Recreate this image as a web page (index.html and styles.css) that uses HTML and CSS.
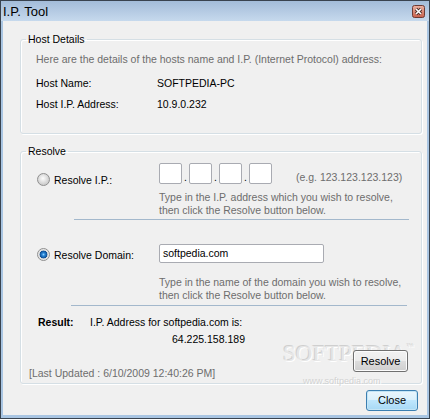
FILE: index.html
```html
<!DOCTYPE html>
<html lang="en">
<head>
  <meta charset="UTF-8" />
  <title>I.P. Tool</title>
  <link rel="stylesheet" href="styles.css">
</head>
<body>
  <div class="window">
    <div class="titlebar">
      <span class="title">I.P. Tool</span>
      <span class="close-x">
        <svg width="13" height="13" viewBox="0 0 13 13">
          <defs>
            <linearGradient id="xg" x1="0" y1="0" x2="0" y2="1">
              <stop offset="0" stop-color="#eab3a4" />
              <stop offset="1" stop-color="#c9604c" />
            </linearGradient>
          </defs>
          <rect x="0.5" y="0.5" width="12" height="12" rx="2" fill="url(#xg)" stroke="#6e3b34" />
          <path d="M4 4l5 5M9 4l-5 5" stroke="#4a2c28" stroke-width="3.2" />
          <path d="M4 4l5 5M9 4l-5 5" stroke="#fff" stroke-width="1.6" />
        </svg>
      </span>
    </div>

    <div class="client">
      <fieldset class="group host">
        <legend>Host Details</legend>
        <p class="note">Here are the details of the hosts name and I.P. (Internet Protocol) address:</p>
        <div class="field first"><span class="field-label">Host Name:</span><span>SOFTPEDIA-PC</span></div>
        <div class="field"><span class="field-label">Host I.P. Address:</span><span>10.9.0.232</span></div>
      </fieldset>

      <fieldset class="group resolve">
        <legend>Resolve</legend>

        <div class="option option-ip">
          <label class="option-label"><span class="radio"></span>Resolve I.P.:</label>
          <div class="option-body">
            <div class="ip-row">
              <span class="octet"></span><span class="dot">.</span><span class="octet"></span><span class="dot">.</span><span class="octet"></span><span class="dot">.</span><span class="octet"></span>
              <span class="hint">(e.g. 123.123.123.123)</span>
            </div>
            <p class="note">Type in the I.P. address which you wish to resolve,<br>then click the Resolve button below.</p>
          </div>
        </div>
        <hr class="sep sep-ip">

        <div class="option option-domain">
          <label class="option-label"><span class="radio checked"></span>Resolve Domain:</label>
          <div class="option-body">
            <div class="text-input">softpedia.com</div>
            <p class="note">Type in the name of the domain you wish to resolve,<br>then click the Resolve button below.</p>
          </div>
        </div>
        <hr class="sep sep-domain">

        <div class="result">
          <b class="result-label">Result:</b>
          <div class="result-text">
            I.P. Address for softpedia.com is:
            <span class="result-ip">64.225.158.189</span>
          </div>
        </div>

        <div class="footer-row">
          <span class="updated">[Last Updated : 6/10/2009 12:40:26 PM]</span>
          <button class="btn btn-resolve">Resolve</button>
        </div>
      </fieldset>

      <div class="actions">
        <button class="btn btn-close">Close</button>
      </div>
    </div>

    <div class="watermark">SOFTPEDIA<sup>™</sup></div>
    <div class="watermark-url">www.softpedia.com</div>
  </div>
</body>
</html>
```

FILE: styles.css
```css
body {
  margin: 0;
  font: 10.5px/13px "Liberation Sans", Arial, sans-serif;
  color: #000;
  background: #fff;
}
.window {
  position: relative;
  width: 430px;
  height: 419px;
  box-sizing: border-box;
  border: 1px solid #39434f;
  background: #a9c5e2;
  display: flex;
  flex-direction: column;
}
.titlebar {
  height: 20px;
  flex: none;
  display: flex;
  justify-content: space-between;
  align-items: flex-start;
  padding: 0 4px 0 2px;
  background: linear-gradient(#a3bcd9, #c6d9ed);
}
.title {
  font-size: 13px;
  line-height: 15px;
  margin-top: 3px;
}
.close-x {
  margin-top: 4px;
  height: 13px;
}
.client {
  flex: 1;
  min-height: 0;
  background: #f0f0f0;
  margin: 0 2px 3px 2px;
}

/* group boxes */
.group {
  margin: 0 5px 0 17px;
  padding: 0 12px 0 15px;
  border: 1px solid #d5dfe5;
  border-radius: 3px;
  box-shadow: 1px 1px 0 #fff, inset 1px 1px 0 #fff;
  min-width: 0;
}
.group legend {
  padding: 0 2px;
  margin-left: -10px;
  line-height: 13px;
}
.host {
  margin-top: 12px;
  padding-top: 7px;
  padding-bottom: 22px;
}
.resolve {
  margin-top: 11px;
  padding-top: 5px;
  padding-bottom: 3px;
}
.note {
  margin: 0;
  color: #6d6d6d;
  white-space: nowrap;
}
.field {
  display: flex;
  margin-top: 8px;
}
.field.first {
  margin-top: 11px;
}
.field-label {
  width: 121px;
  flex: none;
}

/* resolve options */
.option {
  display: flex;
}
.option-label {
  width: 123px;
  flex: none;
  display: flex;
  align-items: flex-start;
}
.option-ip .option-label {
  padding-top: 11px;
}
.option-domain {
  margin-top: 24px;
}
.option-domain .option-label {
  padding-top: 5px;
}
.radio {
  width: 13px;
  height: 13px;
  box-sizing: border-box;
  flex: none;
  margin: -1px 4px 0 1px;
  border-radius: 50%;
  border: 1px solid #8f8f8f;
  background: radial-gradient(circle at 45% 40%, #fdfdfd 0, #e6e6e6 3px, #cfcfcf 6px);
}
.radio.checked {
  background: radial-gradient(circle at 50% 50%, #8fd0ff 0, #2a86d6 1.5px, #0d4f96 3.6px, #d9d9d9 4.2px, #f4f4f4 6px);
}
.ip-row {
  display: flex;
  align-items: flex-end;
  height: 21px;
}
.octet {
  width: 23px;
  height: 21px;
  box-sizing: border-box;
  border: 1px solid #a9abb2;
  border-radius: 2px;
  background: #fff;
}
.dot {
  width: 7px;
  text-align: center;
}
.hint {
  margin-left: 24px;
  color: #6d6d6d;
}
.option-ip .note {
  margin-top: 7px;
}
.text-input {
  width: 165px;
  height: 19px;
  box-sizing: border-box;
  border: 1px solid #a9abb2;
  border-radius: 2px;
  background: #fff;
  padding: 2px 3px;
  line-height: 13px;
}
.option-domain .note {
  margin-top: 13px;
}
.sep {
  border: 0;
  height: 1px;
  background: #a3b8cc;
  margin: 2px 0 0 38px;
}
.sep-domain {
  margin: 3px 2px 0 35px;
}

/* result */
.result {
  display: flex;
  margin-top: 10px;
}
.result-label {
  width: 52px;
  flex: none;
  padding-left: 2px;
}
.result-ip {
  display: block;
  margin-top: 4px;
  padding-left: 82px;
}
.footer-row {
  display: flex;
  justify-content: space-between;
  align-items: flex-start;
  margin-top: 4px;
}
.updated {
  margin: 17px 0 0 -7px;
  color: #6d6d6d;
}

/* buttons */
.btn {
  position: relative;
  z-index: 1;
  font: 11px/13px "Liberation Sans", Arial, sans-serif;
  color: #000;
  padding: 0;
  border: 1px solid #707070;
  border-radius: 3px;
  background: linear-gradient(#f2f2f2 0, #ebebeb 50%, #dddddd 50%, #cfcfcf 100%);
  box-shadow: inset 0 0 0 1px #fcfcfc;
}
.btn-resolve {
  width: 55px;
  height: 22px;
  margin-right: 1px;
}
.actions {
  display: flex;
  justify-content: flex-end;
  padding-right: 9px;
  margin-top: 6px;
}
.btn-close {
  width: 52px;
  height: 21px;
  border-color: #3c7fb1;
  background: linear-gradient(#eaf6fd 0, #d9f0fc 50%, #bee6fd 50%, #a7d9f5 100%);
  box-shadow: inset 0 0 0 1px #c4e5f6;
}

/* softpedia watermark */
.watermark {
  position: absolute;
  left: 282px;
  top: 341px;
  font: 23px/24px "Liberation Serif", serif;
  color: #e6e6e6;
  text-shadow: 1px 1px 0 #fff, -1px -1px 0 #cfcfcf;
  pointer-events: none;
}
.watermark sup {
  font-size: 7px;
  vertical-align: top;
  line-height: 10px;
}
.watermark-url {
  position: absolute;
  left: 302px;
  top: 375px;
  font: 9px/10px "Liberation Sans", Arial, sans-serif;
  color: #d2d2d2;
  text-shadow: 1px 1px 0 #fff;
  pointer-events: none;
}
```
